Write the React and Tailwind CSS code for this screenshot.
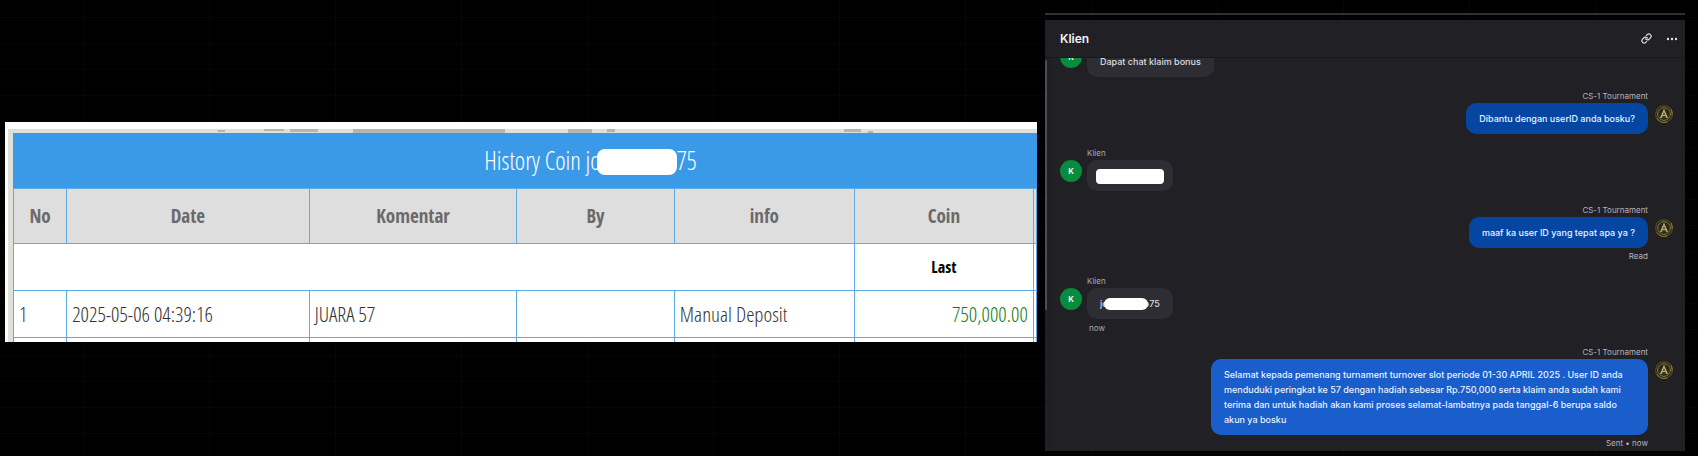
import { Link } from "lucide-react";

const columns = [
  { label: "No", width: "w-[5.2%]" },
  { label: "Date", width: "w-[23.7%]" },
  { label: "Komentar", width: "w-[20.3%]" },
  { label: "By", width: "w-[15.4%]" },
  { label: "info", width: "w-[17.6%]" },
  { label: "Coin", width: "w-[17.5%]" },
];

const longMessage =
  "Selamat kepada pemenang turnament turnover slot periode 01-30 APRIL 2025 . User ID anda menduduki peringkat ke 57 dengan hadiah sebesar Rp.750,000 serta klaim anda sudah kami terima dan untuk hadiah akan kami proses selamat-lambatnya pada tanggal-6 berupa saldo akun ya bosku";

// Bottom edge of the page that the history popup covers
function CoveredStrip() {
  return (
    <svg className="block h-1 w-full" viewBox="0 0 1029 4" preserveAspectRatio="none" aria-hidden="true">
      <rect width="1029" height="4" fill="#dfe0da" />
      <g fill="#b5b5b1">
        <rect x="210" y="1" width="7" height="2" />
        <rect x="256" y="0" width="20" height="2" />
        <rect x="282" y="0" width="28" height="3" />
        <rect x="345" y="0" width="152" height="4" />
        <rect x="560" y="0" width="24" height="4" />
        <rect x="599" y="0" width="8" height="3" />
        <rect x="836" y="0" width="17" height="3" />
        <rect x="860" y="2" width="5" height="2" />
      </g>
    </svg>
  );
}

function HistoryTable() {
  return (
    <section className="mt-[122px] min-w-0 flex-[1032] self-start overflow-hidden bg-white pt-[7px] font-['Open_Sans_Condensed_Light','Noto_Sans_Condensed','Liberation_Sans_Narrow','Open_Sans',sans-serif]">
      <div className="pl-[3px]">
        <CoveredStrip />
        <div className="border-l-[5px] border-[#dfe0da]">
          <table className="w-full table-fixed border-collapse text-[21px] leading-7 text-[#333]">
            <caption className="bg-[#3b9ae8] pl-[131px] text-center text-[25px] leading-[55px] text-white">
              History Coin jo
              <span className="relative -ml-1 inline-block h-[26px] w-20 rounded-lg bg-white align-[-5px]" />
              75
            </caption>
            <thead className="font-['Open_Sans_Condensed','Liberation_Sans_Narrow','Open_Sans',sans-serif] text-[19px]">
              <tr className="h-[55px] bg-[#dedede] text-[#6a6a6a]">
                {columns.map((column) => (
                  <th key={column.label} className={`border border-[#5fabe6] p-0 font-bold ${column.width}`}>
                    {column.label}
                  </th>
                ))}
                <th className="border border-[#5fabe6] p-0" />
              </tr>
            </thead>
            <tbody>
              <tr className="h-[47px]">
                <td colSpan={5} className="border border-[#5fabe6] p-0" />
                <td className="border border-[#5fabe6] p-0 text-center font-['Open_Sans_Condensed','Liberation_Sans_Narrow','Open_Sans',sans-serif] text-base font-bold text-black">
                  Last
                </td>
                <td className="border border-[#5fabe6] p-0" />
              </tr>
              <tr className="h-[47px]">
                <td className="border border-[#5fabe6] px-[5px] py-0">1</td>
                <td className="border border-[#5fabe6] px-[5px] py-0">2025-05-06 04:39:16</td>
                <td className="border border-[#5fabe6] px-[5px] py-0">JUARA 57</td>
                <td className="border border-[#5fabe6] px-[5px] py-0" />
                <td className="border border-[#5fabe6] px-[5px] py-0">Manual Deposit</td>
                <td className="border border-[#5fabe6] px-[5px] py-0 text-right text-[#15801a]">750,000.00</td>
                <td className="border border-[#5fabe6] p-0" />
              </tr>
              <tr className="h-1">
                {columns.map((column) => (
                  <td key={column.label} className="border border-b-0 border-[#5fabe6] p-0" />
                ))}
                <td className="border border-b-0 border-[#5fabe6] p-0" />
              </tr>
            </tbody>
          </table>
        </div>
      </div>
    </section>
  );
}

function AgentAvatar() {
  return (
    <svg className="size-5 shrink-0" viewBox="0 0 20 20" fill="none" aria-hidden="true">
      <circle cx="10" cy="10" r="9.5" fill="#14130f" />
      <circle cx="10" cy="10" r="8.4" stroke="#4d451a" strokeWidth="1.6" />
      <circle cx="10" cy="10" r="6.4" fill="#2b2818" stroke="#8d8766" strokeWidth="0.9" />
      <path d="M3 14.5A8.4 8.4 0 0 0 13 17.8M16.8 5.2A8.4 8.4 0 0 1 18.2 11" stroke="#857722" strokeWidth="1.2" />
      <path d="M7 13.4 10 6.4l3 7M8.2 11.4h3.6" stroke="#b3a76c" strokeWidth="1.5" />
      <path d="M5.8 13.6h2.6M11.6 13.6h2.6" stroke="#a8994a" strokeWidth="1" />
    </svg>
  );
}

function ClientMessage({ children, status }) {
  return (
    <article className="flex shrink-0 gap-[5px] pl-[10px]">
      <div className="mt-3.5 flex size-[22px] shrink-0 items-center justify-center rounded-full bg-[#068c3c] text-[8px] font-semibold text-white">
        K
      </div>
      <div className="flex flex-col items-start">
        <p className="h-3.5 text-[8px] leading-[14px] text-[#a9a9ad]">Klien</p>
        <div className="rounded-[10px] bg-[#2e2d34] px-[13px] py-2 text-[9px] leading-[15px] font-medium text-[#dededf]">
          {children}
        </div>
        {status && <p className="h-3.5 px-0.5 text-[8px] leading-[18px] text-[#a9a9ad]">{status}</p>}
      </div>
    </article>
  );
}

function AgentMessage({ children, status, latest }) {
  return (
    <article className="flex shrink-0 justify-end gap-1.5 pr-[11px]">
      <div className="flex max-w-[437px] flex-col items-end">
        <p className="h-3.5 text-[8px] leading-[14px] text-[#b5b5b9]">CS-1 Tournament</p>
        <div
          className={`rounded-[10px] px-[13px] py-2 text-[9px] leading-[15px] font-medium text-[#edf2fb] ${latest ? "bg-[#195ecb]" : "bg-[#0546a2]"}`}
        >
          {children}
        </div>
        {status && <p className="h-3.5 text-[8px] leading-4 text-[#b5b5b9]">{status}</p>}
      </div>
      <div className="mt-[15px]">
        <AgentAvatar />
      </div>
    </article>
  );
}

function ChatPanel() {
  return (
    <section className="flex min-w-0 flex-[640] flex-col pt-[13px] pb-[5px] font-[Inter,sans-serif]">
      <div className="h-0.5 shrink-0 bg-[#2c3529]" />
      <div className="mt-[5px] flex min-h-0 flex-1 flex-col bg-[#212025]">
        <header className="flex h-[38px] shrink-0 items-center justify-between border-b border-[#19181c] pr-[7px] pl-[15px]">
          <h1 className="text-[12px] font-semibold text-[#f2f2f4]">Klien</h1>
          <div className="flex items-center gap-3.5">
            <button type="button" aria-label="Copy link">
              <Link className="size-[11px] text-[#e0e0e2]" strokeWidth={2.6} />
            </button>
            <button type="button" aria-label="More options">
              <svg className="size-3" viewBox="0 0 12 12" fill="#e0e0e2">
                <circle cx="2" cy="6" r="1.2" />
                <circle cx="6" cy="6" r="1.2" />
                <circle cx="10" cy="6" r="1.2" />
              </svg>
            </button>
          </div>
        </header>
        <div className="relative min-h-0 flex-1">
          <div className="absolute top-0.5 left-0 h-[250px] w-0.5 rounded-full bg-[#4d4d51]" />
          <div className="ml-1 flex h-full flex-col justify-end gap-3 overflow-hidden border-l border-[#1b1a1e] pb-0.5">
            <ClientMessage>Dapat chat klaim bonus</ClientMessage>
            <AgentMessage>Dibantu dengan userID anda bosku?</AgentMessage>
            <ClientMessage>
              <span className="-mx-1 mt-px -mb-px block h-[15px] w-[68px] rounded bg-white" />
            </ClientMessage>
            <AgentMessage status="Read">maaf ka user ID yang tepat apa ya ?</AgentMessage>
            <ClientMessage status="now">
              jo
              <span className="relative -mx-1 inline-block h-3 w-11 rounded-full bg-white align-[-3px]" />
              o75
            </ClientMessage>
            <AgentMessage status="Sent • now" latest>
              {longMessage}
            </AgentMessage>
          </div>
        </div>
      </div>
    </section>
  );
}

export default function App() {
  return (
    <main className="flex h-screen gap-2 overflow-hidden bg-black bg-[linear-gradient(#060606_1px,transparent_1px),linear-gradient(90deg,#060606_1px,transparent_1px)] bg-[size:126px_26px] bg-[position:83px_17px] pr-[13px] pl-[5px]">
      <HistoryTable />
      <ChatPanel />
    </main>
  );
}
